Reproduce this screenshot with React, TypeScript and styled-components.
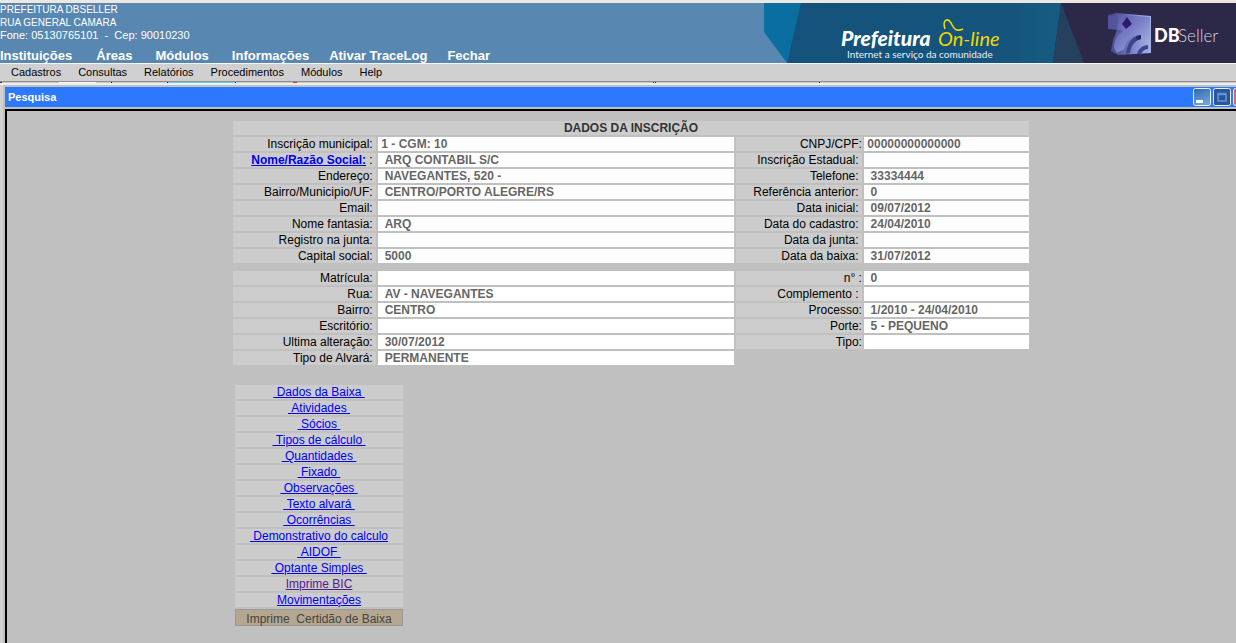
import React from "react";
import styled, { createGlobalStyle, css } from "styled-components";

const GlobalStyle = createGlobalStyle`
  *, *::before, *::after { box-sizing: border-box; }
  html, body { margin: 0; padding: 0; background: #d2d2d2; }
  body { font-family: "Liberation Sans", Arial, sans-serif; font-size: 12px; }
  button { font-family: inherit; }
`;

const Page = styled.div`
  display: flex;
  flex-direction: column;
  min-height: 100vh;
  overflow: hidden;
  border-top: 3px solid #ece8e1;
`;

const Header = styled.header`
  display: flex;
  justify-content: space-between;
  height: 60px;
  overflow: hidden;
  background: #5887b2;
  color: #fff;
`;

const HeaderInfo = styled.div`
  display: flex;
  flex-direction: column;
  justify-content: space-between;
  white-space: nowrap;
`;

const Address = styled.address`
  font-style: normal;
  font-size: 10px;
  line-height: 13px;
  white-space: pre;
`;

const Phone = styled.div`
  font-size: 11px;
`;

const MainNav = styled.nav`
  display: flex;
  height: 15px;
`;

const MainLink = styled.a<{ $gap: number }>`
  padding-right: ${(p) => p.$gap}px;
  color: #fff;
  font-size: 13px;
  font-weight: bold;
  line-height: 16px;
  text-decoration: none;
`;

const Banner = styled.svg`
  flex: none;
  display: block;
`;

const SubNav = styled.nav`
  display: flex;
  height: 19px;
  padding-left: 2px;
  background: #d0d0d0;
  border-top: 1px solid #f6f6f6;
  border-bottom: 1px solid #8e8e8e;
`;

const SubLink = styled.a`
  padding: 0 8px 0 9px;
  color: #000;
  font-size: 11px;
  line-height: 17px;
  text-decoration: none;
`;

const Residue = styled.svg`
  display: block;
  flex: none;
  height: 3px;
  width: 100%;
  background: #eee;
`;

const WindowFrame = styled.section`
  flex: 1;
  display: flex;
  flex-direction: column;
  margin: 0 -23px 0 3px;
  padding: 2px 2px 0;
  background: #c0c0c0;
`;

const TitleBar = styled.div`
  display: flex;
  align-items: center;
  justify-content: space-between;
  height: 20px;
  padding: 0 6px 0 3px;
  background: #2c79ff;
  color: #fff;
`;

const Title = styled.h1`
  margin: 0;
  font-size: 11px;
  line-height: 20px;
`;

const Controls = styled.div`
  display: flex;
  gap: 2px;
`;

const ControlButton = styled.button`
  width: 18px;
  height: 18px;
  padding: 0;
  border: 0;
  background: none;
  svg { display: block; }
`;

const Content = styled.main`
  flex: 1;
  margin-top: 2px;
  padding: 8px 0 16px;
  border: 2px solid #000;
  border-bottom: 0;
`;

const Sheet = styled.div`
  width: 800px;
  margin: 0 auto;
`;

const DataTable = styled.table`
  width: 800px;
  table-layout: fixed;
  border-collapse: separate;
  border-spacing: 2px;
  font-size: 12px;
  line-height: 14px;
  th, td { height: 14px; padding: 0; white-space: pre; }
`;

const Column = styled.col<{ $width?: number }>`
  width: ${(p) => (p.$width ? p.$width + "px" : "auto")};
`;

const Heading = styled.th`
  background: #ccc;
  color: #333;
`;

const Label = styled.th`
  background: #ccc;
  color: #000;
  font-weight: normal;
  text-align: right;
`;

const Value = styled.td`
  background: #fff;
  color: #666;
  font-weight: bold;
`;

const SpacerRow = styled.tr`
  && td { height: 4px; line-height: 4px; }
`;

const linkStyle = css<{ $visited?: boolean }>`
  color: ${(p) => (p.$visited ? "#551a8b" : "#0000ee")};
  text-decoration: underline;
`;

const NameLink = styled.a`
  ${linkStyle}
  font-weight: bold;
`;

const Actions = styled.ul`
  display: flex;
  flex-direction: column;
  gap: 2px;
  width: 168px;
  margin: 18px 0 0 4px;
  padding: 0;
  list-style: none;
`;

const ActionItem = styled.li`
  height: 14px;
  background: #ccc;
  line-height: 14px;
  text-align: center;
  white-space: pre;
`;

const ActionLink = styled.a<{ $visited?: boolean }>`
  ${linkStyle}
`;

const PrintButton = styled.button`
  display: block;
  width: 168px;
  height: 17px;
  margin: 2px 0 0 4px;
  padding: 2px 0 0;
  border: 1px solid #999;
  background: #b5a78f;
  color: #444;
  font-size: 12px;
  line-height: 14px;
  white-space: pre;
`;

const N = "\u00a0";

type Entry = [string, string];
type Row = [Entry, Entry | null];

const identity: Row[] = [
  [["Inscrição municipal:" + N, N + "1 - CGM: 10"], ["CNPJ/CPF:", N + "00000000000000"]],
  [["Nome/Razão Social:", N + N + "ARQ CONTABIL S/C"], ["Inscrição Estadual:" + N, ""]],
  [["Endereço:" + N, N + N + "NAVEGANTES, 520 -"], ["Telefone:" + N, N + N + "33334444"]],
  [["Bairro/Municipio/UF:" + N, N + N + "CENTRO/PORTO ALEGRE/RS"], ["Referência anterior:" + N, N + N + "0"]],
  [["Email:" + N, ""], ["Data inicial:" + N, N + N + "09/07/2012"]],
  [["Nome fantasia:" + N, N + N + "ARQ"], ["Data do cadastro:" + N, N + N + "24/04/2010"]],
  [["Registro na junta:" + N, ""], ["Data da junta:" + N, ""]],
  [["Capital social:" + N, N + N + "5000"], ["Data da baixa:" + N, N + N + "31/07/2012"]],
];

const location: Row[] = [
  [["Matrícula:" + N, ""], ["n° :", N + N + "0"]],
  [["Rua:" + N, N + N + "AV - NAVEGANTES"], ["Complemento :" + N, ""]],
  [["Bairro:" + N, N + N + "CENTRO"], ["Processo:", N + N + "1/2010 - 24/04/2010"]],
  [["Escritório:" + N, ""], ["Porte:", N + N + "5 - PEQUENO"]],
  [["Ultima alteração:" + N, N + N + "30/07/2012"], ["Tipo:", ""]],
  [["Tipo de Alvará:" + N, N + N + "PERMANENTE"], null],
];

const actions = [
  N + "Dados da Baixa" + N,
  N + "Atividades" + N,
  N + "Sócios" + N,
  N + "Tipos de cálculo" + N,
  N + "Quantidades" + N,
  N + "Fixado" + N,
  N + "Observações" + N,
  N + "Texto alvará" + N,
  N + "Ocorrências" + N,
  N + "Demonstrativo do calculo",
  N + "AIDOF" + N,
  N + "Optante Simples" + N,
  "Imprime BIC",
  "Movimentações",
];

const mainMenu: [string, number][] = [
  ["Instituições", 24],
  ["Áreas", 23],
  ["Módulos", 23],
  ["Informações", 20],
  ["Ativar TraceLog", 20],
  ["Fechar", 0],
];

const subMenu = ["Cadastros", "Consultas", "Relatórios", "Procedimentos", "Módulos", "Help"];

function DataRows({ rows }: { rows: Row[] }) {
  return (
    <>
      {rows.map(([left, right]) => (
        <tr key={left[0]}>
          <Label scope="row">
            {left[0].startsWith("Nome/") ? (
              <>
                <NameLink href="#nome">{left[0]}</NameLink>
                {N + ":" + N}
              </>
            ) : (
              left[0]
            )}
          </Label>
          <Value>{left[1]}</Value>
          {right && (
            <>
              <Label scope="row">{right[0]}</Label>
              <Value>{right[1]}</Value>
            </>
          )}
        </tr>
      ))}
    </>
  );
}

function BrandBanner() {
  return (
    <Banner width="472" height="60" viewBox="0 0 472 60" role="img" aria-label="Prefeitura On-line, DBSeller">
      <defs>
        <linearGradient id="sea" x1="0" x2="1">
          <stop offset="0" stopColor="#14527b" />
          <stop offset="0.8" stopColor="#15547c" />
          <stop offset="1" stopColor="#155d82" />
        </linearGradient>
        <linearGradient id="cube" x1="0" y1="0" x2="1" y2="0">
          <stop offset="0" stopColor="#45468f" />
          <stop offset="0.3" stopColor="#5a5ca8" />
          <stop offset="0.6" stopColor="#8088cc" />
          <stop offset="1" stopColor="#a3b2e4" />
        </linearGradient>
        <linearGradient id="face" x1="0" y1="0" x2="1" y2="1">
          <stop offset="0" stopColor="#5656a2" />
          <stop offset="0.5" stopColor="#7d83c8" />
          <stop offset="1" stopColor="#b0c0ec" />
        </linearGradient>
      </defs>
      <path d="M0 0H40L23 60L0 29Z" fill="#0b6ea0" />
      <path d="M37 0H300V60H23Z" fill="url(#sea)" />
      <path d="M297 0H472V60H289Z" fill="#2c2847" />
      <path d="M297 0L320 60H289Z" fill="#26415f" />
      <text x="77" y="43" fontFamily="Lato" fontSize="21" fontWeight="900" fontStyle="italic" fill="#fff">Prefeitura</text>
      <text x="174" y="43" fontFamily="Lato" fontSize="20" fontStyle="italic" fill="#f2d800">On-line</text>
      <path d="M181 26C178 16 184 15 187 20C190 26 192 29 199 26" fill="none" stroke="#f2d800" strokeWidth="1.6" />
      <text x="83" y="55" fontFamily="Lato" fontSize="10" fill="#e6f1f7">Internet a serviço da comunidade</text>
      <path d="M344 12L353 10L387 13L387 50L354 52L347 48L349 37L353 27L344 26Z" fill="url(#cube)" />
      <path d="M344 13L351 13V26H344Z" fill="#5354a0" />
      <path d="M355 12L386 14L386 38C382 36 378 38 376 41L375 31C368 31 363 36 360 46L353 50L350 45C350 37 354 31 359 28L353 26Z" fill="url(#face)" />
      <path d="M363 14L368 21L362 26L358 21Z" fill="#2f1a70" />
      <path d="M377 32C370 31 363 39 362 51L366 50C367 43 370 38 377 36Z" fill="#3f4490" />
      <path d="M372 34L377 32V36L373 37Z" fill="#262562" />
      <path d="M384 42C379 42 374 46 373 51H377C378 48 381 46 384 46Z" fill="#3f4490" />
      <text x="390" y="39" fontFamily="Lato" fontSize="18" fontWeight="900" fill="#fff">DB</text>
      <text x="414" y="39" fontFamily="Lato" fontSize="17" fontWeight="300" fill="#d6d4e1">Seller</text>
    </Banner>
  );
}

function WindowIcon({ kind }: { kind: "minimize" | "maximize" | "close" }) {
  return (
    <svg width="18" height="18" viewBox="0 0 18 18" aria-hidden="true">
      <defs>
        <linearGradient id="minimizeFill" x1="0" y1="0" x2="0.4" y2="1">
          <stop offset="0" stopColor="#2f66ac" />
          <stop offset="1" stopColor="#6ba3d8" />
        </linearGradient>
      </defs>
      <rect
        x="0.5"
        y="0.5"
        width="17"
        height="17"
        rx="2"
        fill={kind === "close" ? "#e0654a" : kind === "minimize" ? "url(#minimizeFill)" : "#2a5596"}
        stroke="#e8eef8"
      />
      {kind === "minimize" && <path d="M3 12H10V15H3Z" fill="#fff" />}
      {kind === "maximize" && <path d="M5 5.5H13V13H5ZM5 6.5H13" fill="none" stroke="#5f94dc" strokeWidth="1.6" />}
      {kind === "close" && <path d="M5 5L13 13M13 5L5 13" stroke="#fff" strokeWidth="2" />}
    </svg>
  );
}

export default function App() {
  return (
    <Page>
      <GlobalStyle />
      <Header>
        <HeaderInfo>
          <Address>
            <div>PREFEITURA DBSELLER</div>
            <div>RUA GENERAL CAMARA</div>
            <Phone>{"Fone: 05130765101  -  Cep: 90010230"}</Phone>
          </Address>
          <MainNav aria-label="Principal">
            {mainMenu.map(([text, gap]) => (
              <MainLink key={text} href="#" $gap={gap}>{text}</MainLink>
            ))}
          </MainNav>
        </HeaderInfo>
        <BrandBanner />
      </Header>
      <SubNav aria-label="Módulo">
        {subMenu.map((text) => (
          <SubLink key={text} href="#">{text}</SubLink>
        ))}
      </SubNav>
      <Residue aria-hidden="true" shapeRendering="crispEdges">
        <path d="M0 0H2000V1H0Z" fill="#c8c8c8" />
        <path d="M59 0H96V1H59Z" fill="#fff" />
        <path d="M0 0H2V1H0ZM653 0H654V1H653ZM655 0H656V1H655ZM819 0H820V1H819Z" fill="#333" />
        <path d="M167 0H236V1H167Z" fill="#5fd4f4" />
        <path d="M111 0H112V1H111ZM167 0H168V1H167ZM235 0H236V1H235Z" fill="#1a0a9a" />
        <path d="M293 0H297V1H293Z" fill="#e33" />
      </Residue>
      <WindowFrame aria-label="Pesquisa">
        <TitleBar>
          <Title>Pesquisa</Title>
          <Controls>
            <ControlButton type="button" aria-label="Minimizar"><WindowIcon kind="minimize" /></ControlButton>
            <ControlButton type="button" aria-label="Maximizar"><WindowIcon kind="maximize" /></ControlButton>
            <ControlButton type="button" aria-label="Fechar"><WindowIcon kind="close" /></ControlButton>
          </Controls>
        </TitleBar>
        <Content>
          <Sheet>
            <DataTable>
              <colgroup>
                <Column $width={143} />
                <Column />
                <Column $width={126} />
                <Column $width={165} />
              </colgroup>
              <tbody>
                <tr>
                  <Heading colSpan={4}>DADOS DA INSCRIÇÃO</Heading>
                </tr>
                <DataRows rows={identity} />
                <SpacerRow><td colSpan={4} /></SpacerRow>
                <DataRows rows={location} />
              </tbody>
            </DataTable>
            <Actions>
              {actions.map((text) => (
                <ActionItem key={text}>
                  <ActionLink href="#" $visited={text === "Imprime BIC"}>{text}</ActionLink>
                </ActionItem>
              ))}
            </Actions>
            <PrintButton type="button">{"Imprime  Certidão de Baixa"}</PrintButton>
          </Sheet>
        </Content>
      </WindowFrame>
    </Page>
  );
}
